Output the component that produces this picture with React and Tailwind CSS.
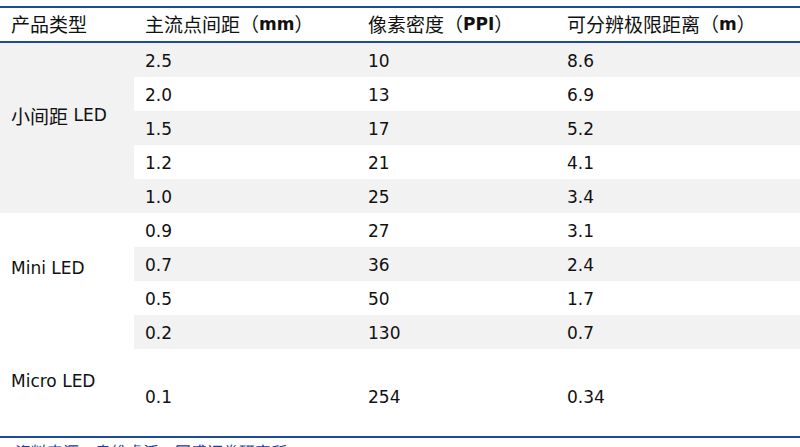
const rows = [
    {pitch: "2.5", ppi: "10", dist: "8.6"},
    {pitch: "2.0", ppi: "13", dist: "6.9"},
    {pitch: "1.5", ppi: "17", dist: "5.2"},
    {pitch: "1.2", ppi: "21", dist: "4.1"},
    {pitch: "1.0", ppi: "25", dist: "3.4"},
    {pitch: "0.9", ppi: "27", dist: "3.1"},
    {pitch: "0.7", ppi: "36", dist: "2.4"},
    {pitch: "0.5", ppi: "50", dist: "1.7"},
    {pitch: "0.2", ppi: "130", dist: "0.7"},
    {pitch: "0.1", ppi: "254", dist: "0.34"},
];

const font = {fontFamily: '"DejaVu Sans", "Noto Sans CJK SC", sans-serif'};

function Cn({children}) {
    return <span className="text-[19px]" style={{fontFamily: '"Noto Sans CJK SC", sans-serif'}}>{children}</span>;
}

function HeadCell({children}) {
    return (
        <div className="flex items-center pl-[11px] whitespace-nowrap">
            {children}
        </div>
    );
}

export default function App() {
    return (
        <div className="w-[800px] h-[447px] overflow-hidden bg-white pt-[6px] text-[#111] text-[17px]" style={font}>
            <div className="h-[2px] bg-[#1d4a9b]"/>
            <div className="grid grid-cols-[134px_223px_199px_244px] h-[33px]">
                <HeadCell><Cn>产品类型</Cn></HeadCell>
                <HeadCell><Cn>主流点间距（</Cn><b>mm</b><Cn>）</Cn></HeadCell>
                <HeadCell><Cn>像素密度（</Cn><b>PPI</b><Cn>）</Cn></HeadCell>
                <HeadCell><Cn>可分辨极限距离（</Cn><b>m</b><Cn>）</Cn></HeadCell>
            </div>
            <div className="h-[2px] bg-[#1d4a9b]"/>

            <div className="grid grid-cols-[134px_223px_199px_244px] grid-rows-[repeat(9,34px)_87px]">
                <div className="row-start-1 row-span-5 col-start-1 bg-[#f2f2f2] flex items-center pl-[11px] pb-[24px]">
                    <Cn>小间距</Cn>&nbsp;LED
                </div>
                <div className="row-start-6 row-span-4 col-start-1 flex items-center pl-[11px] pb-[24px]">Mini LED</div>
                <div className="row-start-10 col-start-1 flex items-center pl-[11px] pb-[22px]">Micro LED</div>

                {rows.map((r, i) => {
                    const bg = i % 2 === 0 && i < 9 ? "bg-[#f2f2f2]" : "bg-white";
                    const pad = i === 9 ? "pt-[10px]" : "pt-[3px]";
                    return (
                        <div key={r.pitch} className={`col-start-2 col-span-3 grid grid-cols-subgrid ${bg}`}
                             style={{gridRowStart: i + 1}}>
                            <div className={`flex items-center pl-[11px] ${pad}`}>{r.pitch}</div>
                            <div className={`flex items-center pl-[11px] ${pad}`}>{r.ppi}</div>
                            <div className={`flex items-center pl-[11px] ${pad}`}>{r.dist}</div>
                        </div>
                    );
                })}
            </div>
            <div className="h-[2px] bg-[#1d4a9b]"/>
            <div className="pl-[12px] mt-[3px] italic text-[16px] leading-[20px] text-[#1e3c96]" style={{fontFamily: '"Noto Sans CJK SC", sans-serif'}}>
                资料来源：奥维睿沃，国盛证券研究所
            </div>
        </div>
    );
}
